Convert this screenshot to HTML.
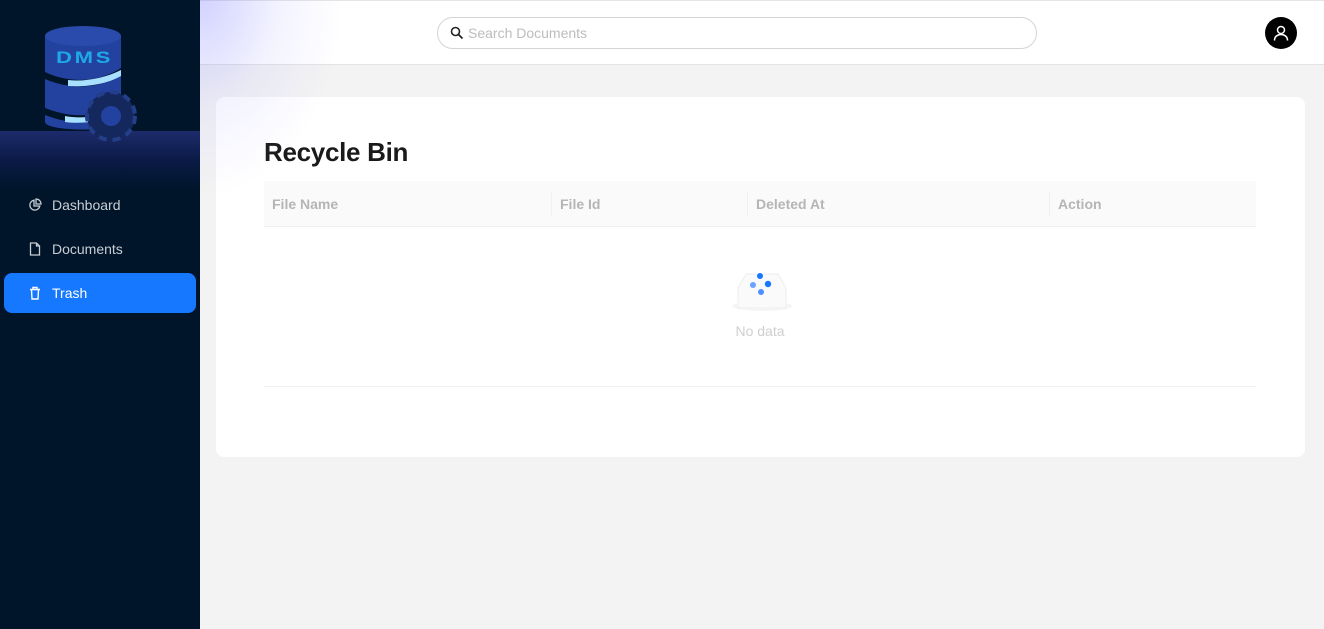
<!DOCTYPE html>
<html><head><meta charset="utf-8"><style>
*{box-sizing:border-box;margin:0;padding:0}
body{width:1324px;height:629px;overflow:hidden;background:#f3f3f3;font-family:"Liberation Sans",sans-serif;position:relative}
.side{position:absolute;left:0;top:0;width:200px;height:629px;background:#001529;z-index:5}
.band{position:absolute;left:0;top:131px;width:200px;height:60px;background:linear-gradient(#1d2b6b,#0a1a45 50%,#001529)}
.menu{position:absolute;left:4px;width:192px;height:40px;border-radius:8px;color:#c9ced6;font-size:14px;display:flex;align-items:center;padding-left:24px}
.menu svg{margin-right:10px}
.act{background:#1677ff;color:#fff}
.header{position:absolute;left:200px;top:0;width:1124px;height:65px;background:#fff;border-top:1px solid #e5e5e5;border-bottom:1px solid #e3e3e3}
.glow{position:absolute;left:140px;top:-60px;width:240px;height:320px;background:radial-gradient(ellipse at 60px 110px,rgba(120,120,255,.35),rgba(160,160,255,.12) 45%,rgba(255,255,255,0) 75%);pointer-events:none;z-index:3}
.search{position:absolute;left:237px;top:16px;width:600px;height:32px;border:1px solid #d4d4d4;border-radius:16px;color:#bcbcbc;font-size:14px;display:flex;align-items:center;padding-left:12px}
.avatar{position:absolute;left:1065px;top:16px;width:32px;height:32px;border-radius:50%;background:#000;display:flex;align-items:center;justify-content:center}
.card{position:absolute;left:216px;top:97px;width:1089px;height:360px;background:#fff;border-radius:8px}
h1{position:absolute;left:264px;top:137px;font-size:26px;font-weight:bold;color:#1a1a1a;letter-spacing:-0.3px}
.th{position:absolute;left:264px;top:181px;width:992px;height:46px;background:#fafafa;border-bottom:1px solid #f0f0f0;font-size:14px;color:#b5b5b5;font-weight:bold}
.th span{position:absolute;top:15px}
.sep{position:absolute;top:12px;width:1px;height:22px;background:#f0f0f0}
.line{position:absolute;left:264px;top:386px;width:992px;height:1px;background:#f0f0f0}
.nd{position:absolute;left:700px;top:323px;width:120px;text-align:center;font-size:14px;color:#cfcfcf}
</style></head><body>
<div class="header">
<div class="search"><svg width="14" height="14" viewBox="0 0 14 14"><circle cx="5.5" cy="5.5" r="4" fill="none" stroke="#222" stroke-width="1.6"/><path d="M8.5 8.5L12.5 12.5" stroke="#222" stroke-width="1.8"/></svg><span style="margin-left:4px">Search Documents</span></div>
<div class="avatar"><svg width="18" height="18" viewBox="0 0 18 18" fill="none" stroke="#fff" stroke-width="1.5"><circle cx="9" cy="6" r="3.5"/><path d="M2.5 16.5c0-4 3-6 6.5-6s6.5 2 6.5 6"/></svg></div>
</div>
<div class="card"></div>
<h1>Recycle Bin</h1>
<div class="th"><span style="left:8px">File Name</span><div class="sep" style="left:287px"></div><span style="left:296px">File Id</span><div class="sep" style="left:483px"></div><span style="left:492px">Deleted At</span><div class="sep" style="left:785px"></div><span style="left:794px">Action</span></div>
<svg style="position:absolute;left:730px;top:268px" width="64" height="46" viewBox="0 0 64 46"><ellipse cx="32" cy="38" rx="30" ry="5" fill="#f5f5f5"/><path d="M8 20L16 6H48L56 20V40H8Z" fill="#fafafa" stroke="#eee"/><circle cx="30" cy="8" r="3" fill="#1677ff"/><circle cx="23" cy="17" r="3" fill="#69a5ff"/><circle cx="38" cy="16" r="3.2" fill="#1677ff"/><circle cx="31" cy="24" r="3" fill="#4d8fff"/></svg>
<div class="nd">No data</div>
<div class="line"></div>
<div class="side">
<div class="band"></div>
<svg style="position:absolute;left:40px;top:22px" width="104" height="124" viewBox="0 0 104 124">
<path d="M5 14C5 5 81 5 81 14V100C81 110 5 110 5 100Z" fill="#2342a0"/>
<ellipse cx="43" cy="14" rx="38" ry="10" fill="#2a4bab"/>
<path d="M5 50C30 62 60 60 81 46V53C60 67 30 68 5 57Z" fill="#001529"/>
<path d="M28 58C45 60 65 56 81 48V54C65 63 45 65 28 64Z" fill="#a8e0ff"/>
<path d="M5 86C30 96 55 96 81 84V91C55 103 30 103 5 93Z" fill="#001529"/>
<path d="M25 94C40 97 60 95 75 88V94C60 100 40 102 25 100Z" fill="#a8e0ff"/>
<text x="16" y="41" font-family="Liberation Sans" font-weight="bold" font-size="17" fill="#1fa8e8" letter-spacing="2" textLength="57" lengthAdjust="spacingAndGlyphs">DMS</text>
<g transform="translate(71,94)"><circle r="24" fill="#14285e" stroke="#233f8a" stroke-width="4" stroke-dasharray="8 6"/><circle r="19" fill="#14285e"/><circle r="10" fill="#2342a0"/></g>
</svg>
<div class="menu" style="top:185px"><svg width="14" height="14" viewBox="0 0 14 14" fill="none" stroke="#c9ced6" stroke-width="1.3"><path d="M6 2.2A5 5 0 1 0 11.8 8H6Z"/><path d="M8 1A5 5 0 0 1 13 6H8Z"/></svg>Dashboard</div>
<div class="menu" style="top:229px"><svg width="14" height="14" viewBox="0 0 14 14" fill="none" stroke="#c9ced6" stroke-width="1.3"><path d="M2.5 1H8.5L11.5 4V13H2.5Z M8.5 1V4H11.5"/></svg>Documents</div>
<div class="menu act" style="top:273px"><svg width="14" height="14" viewBox="0 0 14 14" fill="none" stroke="#fff" stroke-width="1.4"><path d="M2 3.5H12M5 3.5V1.5H9V3.5M3.5 3.5L4 13H10L10.5 3.5"/></svg>Trash</div>
</div>
<div class="glow" style="left:200px;width:180px;background:radial-gradient(ellipse 180px 260px at 0px 50px,rgba(120,120,255,.35),rgba(160,160,255,.12) 45%,rgba(255,255,255,0) 80%)"></div>
</body></html>
